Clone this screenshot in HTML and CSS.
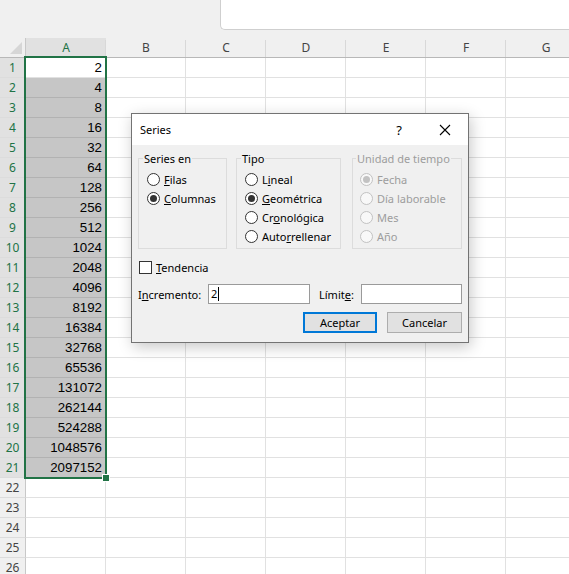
FILE: index.html
```html
<!DOCTYPE html>
<html lang="es">
<head>
  <meta charset="UTF-8">
  <title>Series</title>
  <link rel="stylesheet" href="styles.css">
</head>
<body>

  <div class="top-bar">
    <div class="formula-box"></div>
  </div>

  <div class="sheet">
    <div class="rows" id="rows"></div>
    <!-- selection A1:A21 -->
    <div class="sel-box"><span class="fill-handle"></span></div>
  </div>

  <div class="dialog">
    <div class="dialog-title">
      <span class="title-text">Series</span>
      <span class="help">?</span>
      <svg class="close" width="12" height="12" viewBox="0 0 12 12">
        <path d="M1 1 L11 11 M11 1 L1 11" stroke="#000" stroke-width="1.1" fill="none"/>
      </svg>
    </div>

    <div class="dialog-body">
      <div class="groups">
        <fieldset class="group group-series">
          <legend>Series en</legend>
          <div class="opt"><span class="radio"></span><span><u>F</u>ilas</span></div>
          <div class="opt"><span class="radio on"></span><span><u>C</u>olumnas</span></div>
        </fieldset>

        <fieldset class="group group-tipo">
          <legend>Tipo</legend>
          <div class="opt"><span class="radio"></span><span>L<u>i</u>neal</span></div>
          <div class="opt"><span class="radio on"></span><span><u>G</u>eométrica</span></div>
          <div class="opt"><span class="radio"></span><span>Cr<u>o</u>nológica</span></div>
          <div class="opt"><span class="radio"></span><span>Auto<u>r</u>rellenar</span></div>
        </fieldset>

        <fieldset class="group group-unidad disabled">
          <legend>Unidad de tiempo</legend>
          <div class="opt"><span class="radio on"></span><span>Fecha</span></div>
          <div class="opt"><span class="radio"></span><span>Día laborable</span></div>
          <div class="opt"><span class="radio"></span><span>Mes</span></div>
          <div class="opt"><span class="radio"></span><span>Año</span></div>
        </fieldset>
      </div>

      <div class="trend-row">
        <span class="checkbox"></span><span><u>T</u>endencia</span>
      </div>

      <div class="input-row">
        <span class="lbl lbl-inc">I<u>n</u>cremento:</span>
        <div class="textbox tb-inc">2<span class="caret"></span></div>
        <span class="lbl lbl-lim">Límit<u>e</u>:</span>
        <div class="textbox tb-lim"></div>
      </div>

      <div class="btn-row">
        <button class="btn btn-default">Aceptar</button>
        <button class="btn">Cancelar</button>
      </div>
    </div>
  </div>

  <script>
    const cols = ['A', 'B', 'C', 'D', 'E', 'F', 'G'];
    const rows = document.getElementById('rows');

    // column headers
    let head = '<div class="row head-row"><div class="corner"><span class="tri"></span></div>';
    cols.forEach((c, i) => {
      head += `<div class="colhead${i === 0 ? ' sel' : ''}">${c}</div>`;
    });
    rows.innerHTML = head + '</div>';

    for (let r = 1; r <= 26; r++) {
      const inSel = r <= 21;
      let html = `<div class="row"><div class="rowhead${inSel ? ' sel' : ''}">${r}</div>`;
      cols.forEach((c, i) => {
        let cls = 'cell';
        let val = '';
        if (i === 0 && inSel) {
          val = Math.pow(2, r);
          if (r > 1) cls += ' sel';
        }
        html += `<div class="${cls}">${val}</div>`;
      });
      rows.insertAdjacentHTML('beforeend', html + '</div>');
    }
  </script>

</body>
</html>
```

FILE: styles.css
```css
body {
  margin: 0;
  background: #f0f0f0;
  font-family: 'Noto Sans', sans-serif;
  overflow: hidden;
  width: 569px;
  height: 574px;
  position: relative;
}

.top-bar {
  height: 38px;
}

.formula-box {
  margin-left: 220px;
  height: 30px;
  background: #fff;
  border-left: 1px solid #cfcfcf;
  border-bottom: 1px solid #cfcfcf;
  border-bottom-left-radius: 5px;
  box-sizing: border-box;
}

/* ---- sheet ---- */
.sheet {
  position: relative;
  width: 586px;
}

.row {
  display: flex;
  height: 20px;
}

.corner,
.rowhead {
  width: 26px;
  flex: none;
  box-sizing: border-box;
  border-right: 1px solid #c8c8c8;
}

.corner {
  position: relative;
  background: #f0f0f0;
  border-bottom: 1px solid #b8b8b8;
}

.tri {
  position: absolute;
  right: 3px;
  bottom: 3px;
  width: 0;
  height: 0;
  border-left: 12px solid transparent;
  border-bottom: 12px solid #d6d6d6;
}

.colhead {
  width: 80px;
  flex: none;
  box-sizing: border-box;
  position: relative;
  background: #f0f0f0;
  border-bottom: 1px solid #b8b8b8;
  text-align: center;
  font-size: 12px;
  line-height: 20px;
  color: #444;
}

.colhead::after {
  content: "";
  position: absolute;
  right: 0;
  top: 2px;
  bottom: 0;
  width: 1px;
  background: #d8d8d8;
}

.colhead.sel {
  background: #e1e1e1;
  color: #217346;
}

.rowhead {
  background: #f0f0f0;
  border-bottom: 1px solid #dcdcdc;
  text-align: center;
  font-size: 12px;
  line-height: 19px;
  color: #444;
}

.rowhead.sel {
  background: #e1e1e1;
  color: #217346;
}

.cell {
  width: 80px;
  flex: none;
  box-sizing: border-box;
  background: #fff;
  border-right: 1px solid #e1e1e1;
  border-bottom: 1px solid #e1e1e1;
  text-align: right;
  padding-right: 3px;
  font-family: 'Liberation Sans', Arial, sans-serif;
  font-size: 13.3px;
  line-height: 20px;
  color: #000;
  overflow: hidden;
}

.cell.sel {
  background: #c6c6c6;
  border-bottom-color: #b2b2b2;
  border-right-color: #c6c6c6;
}

.sel-box {
  position: absolute;
  left: 24px;
  top: 18px;
  width: 83px;
  height: 423px;
  border: 2px solid #217346;
  box-sizing: border-box;
  pointer-events: none;
}

.fill-handle {
  position: absolute;
  right: -5px;
  bottom: -5px;
  width: 6px;
  height: 6px;
  background: #217346;
  border: 1px solid #fff;
}

/* ---- dialog ---- */
.dialog {
  position: absolute;
  left: 131px;
  top: 113px;
  width: 338px;
  height: 230px;
  box-sizing: border-box;
  border: 1px solid #737373;
  background: #f0f0f0;
  box-shadow: 2px 4px 14px rgba(0, 0, 0, 0.22);
  font-size: 11px;
  color: #000;
}

.dialog-title {
  height: 31px;
  background: #fff;
  display: flex;
  align-items: center;
  padding-left: 8px;
}

.title-text {
  flex: 1;
  font-size: 11px;
}

.help {
  font-size: 13px;
  margin-right: 37px;
}

.close {
  margin-right: 17px;
}

.dialog-body {
  padding: 6px 0 0 6px;
}

.groups {
  display: flex;
}

.group {
  margin: 0;
  padding: 4px 0 0 4px;
  height: 98px;
  box-sizing: border-box;
  border: 1px solid #dcdcdc;
  min-width: 0;
}

.group legend {
  padding: 0 1px;
  line-height: 15px;
}

.group-series {
  width: 89px;
  margin-right: 9px;
}

.group-tipo {
  width: 105px;
  margin-right: 11px;
}

.group-unidad {
  width: 110px;
  padding-left: 3px;
}

.opt {
  display: flex;
  align-items: center;
  height: 19px;
  margin-left: 4px;
  gap: 4px;
  white-space: nowrap;
}

.radio {
  width: 13px;
  height: 13px;
  flex: none;
  box-sizing: border-box;
  border: 1px solid #333;
  border-radius: 50%;
  background: #fff;
  display: flex;
  align-items: center;
  justify-content: center;
}

.radio.on::after {
  content: "";
  width: 7px;
  height: 7px;
  border-radius: 50%;
  background: #333;
}

.disabled,
.disabled legend {
  color: #9d9d9d;
}

.disabled .radio {
  border-color: #c2c2c2;
  background: #f8f8f8;
}

.disabled .radio.on::after {
  background: #c2c2c2;
}

.trend-row {
  display: flex;
  align-items: center;
  gap: 4px;
  height: 19px;
  margin-top: 9px;
  padding-left: 1px;
}

.checkbox {
  width: 13px;
  height: 13px;
  box-sizing: border-box;
  border: 1px solid #333;
  background: #fff;
}

.input-row {
  display: flex;
  align-items: center;
  margin-top: 7px;
  height: 20px;
}

.lbl-inc {
  width: 70px;
}

.lbl-lim {
  width: 42px;
  margin-left: 9px;
}

.textbox {
  height: 20px;
  box-sizing: border-box;
  border: 1px solid #9a9a9a;
  background: #fff;
  padding-left: 2px;
  line-height: 18px;
  display: flex;
  align-items: center;
}

.tb-inc {
  width: 102px;
}

.tb-lim {
  width: 101px;
}

.caret {
  width: 1px;
  height: 14px;
  background: #000;
  margin-left: 1px;
}

.btn-row {
  display: flex;
  justify-content: flex-end;
  gap: 10px;
  margin-top: 8px;
  padding-right: 6px;
}

.btn {
  height: 21px;
  width: 75px;
  box-sizing: border-box;
  border: 1px solid #adadad;
  background: #e1e1e1;
  font-family: 'Noto Sans', sans-serif;
  font-size: 11px;
  color: #000;
  padding: 0;
}

.btn-default {
  width: 74px;
  border: 2px solid #0078d7;
}
```
